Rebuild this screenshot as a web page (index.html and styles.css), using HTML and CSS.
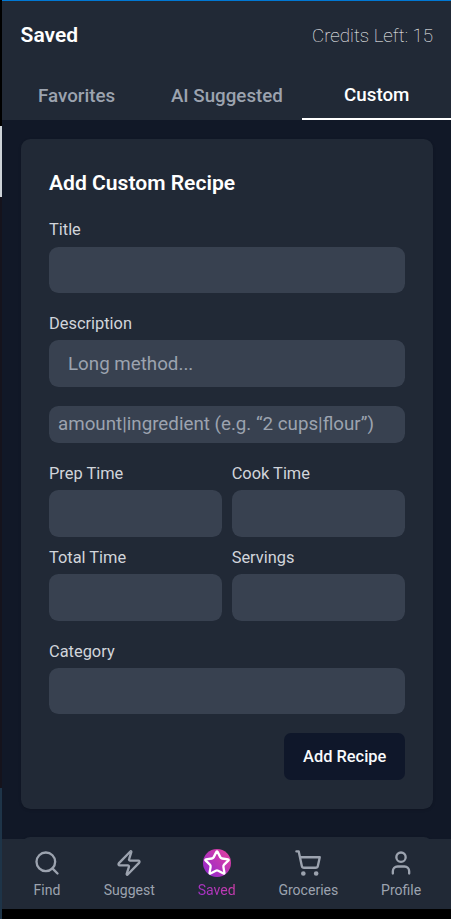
FILE: index.html
```html
<!DOCTYPE html>
<html lang="en">
<head>
<meta charset="utf-8">
<title>Saved</title>
<link rel="stylesheet" href="styles.css">
</head>
<body>
<div class="window">
  <header class="header">
    <div class="topbar">
      <h1 class="page-title">Saved</h1>
      <span class="credits">Credits Left: 15</span>
    </div>
    <nav class="tabs">
      <a class="tab">Favorites</a>
      <a class="tab">AI Suggested</a>
      <a class="tab active">Custom</a>
    </nav>
  </header>
  <main class="content">
    <form class="card">
      <h2 class="card-title">Add Custom Recipe</h2>
      <label class="field"><span class="label">Title</span><input class="input" type="text"></label>
      <label class="field"><span class="label">Description</span><input class="input" type="text" placeholder="Long method..."></label>
      <input class="input ingredients" type="text" placeholder="amount|ingredient (e.g. “2 cups|flour”)">
      <div class="grid">
        <label class="cell"><span class="label">Prep Time</span><input class="input" type="text"></label>
        <label class="cell"><span class="label">Cook Time</span><input class="input" type="text"></label>
        <label class="cell"><span class="label">Total Time</span><input class="input" type="text"></label>
        <label class="cell"><span class="label">Servings</span><input class="input" type="text"></label>
      </div>
      <label class="field"><span class="label">Category</span><input class="input" type="text"></label>
      <div class="actions"><button class="submit" type="button">Add Recipe</button></div>
    </form>
    <div class="card next-card"></div>
  </main>
  <nav class="bottom-nav">
    <a class="nav-item">
      <svg class="icon" viewBox="0 0 24 24"><circle cx="11" cy="11" r="8"/><path d="m21 21-4.35-4.35"/></svg>
      <span>Find</span>
    </a>
    <a class="nav-item">
      <svg class="icon" viewBox="0 0 24 24"><path d="M4 14a1 1 0 0 1-.78-1.63l9.9-10.2a.5.5 0 0 1 .86.46l-1.92 6.02A1 1 0 0 0 13 10h7a1 1 0 0 1 .78 1.63l-9.9 10.2a.5.5 0 0 1-.86-.46l1.92-6.02A1 1 0 0 0 11 14z"/></svg>
      <span>Suggest</span>
    </a>
    <a class="nav-item current">
      <span class="badge"><svg class="icon" viewBox="0 0 24 24"><path d="M11.525 2.295a.53.53 0 0 1 .95 0l2.31 4.679a2.123 2.123 0 0 0 1.595 1.16l5.166.756a.53.53 0 0 1 .294.904l-3.736 3.638a2.123 2.123 0 0 0-.611 1.878l.882 5.14a.53.53 0 0 1-.771.56l-4.618-2.428a2.122 2.122 0 0 0-1.973 0L6.396 21.01a.53.53 0 0 1-.77-.56l.881-5.139a2.122 2.122 0 0 0-.611-1.879L2.16 9.795a.53.53 0 0 1 .294-.906l5.165-.755a2.122 2.122 0 0 0 1.597-1.16z"/></svg></span>
      <span class="current-text">Saved</span>
    </a>
    <a class="nav-item">
      <svg class="icon" viewBox="0 0 24 24"><circle cx="8" cy="21" r="1"/><circle cx="19" cy="21" r="1"/><path d="M2.05 2.05h2l2.66 12.42a2 2 0 0 0 2 1.58h9.78a2 2 0 0 0 1.95-1.57l1.65-7.43H5.12"/></svg>
      <span>Groceries</span>
    </a>
    <a class="nav-item">
      <svg class="icon" viewBox="0 0 24 24"><circle cx="12" cy="7" r="4"/><path d="M19 21v-2a4 4 0 0 0-4-4H9a4 4 0 0 0-4 4v2"/></svg>
      <span>Profile</span>
    </a>
  </nav>
</div>
</body>
</html>
```
FILE: styles.css
```css
* { box-sizing: border-box; }
body {
  margin: 0;
  height: 919px;
  padding-left: 2px;
  overflow: hidden;
  font-family: Roboto, "Liberation Sans", sans-serif;
  background: linear-gradient(#000 0 126px, #cdd3d8 126px 197px, #15131c 197px 788px, #1e3448 788px) left / 2px 100% no-repeat #000;
}
.window {
  display: flex;
  flex-direction: column;
  height: 909px;
  border-top: 1px solid #0078d4;
  background: #111827;
}
.header { flex: none; height: 119px; background: #212936; }
.topbar {
  display: flex;
  justify-content: space-between;
  align-items: center;
  height: 69px;
  padding: 0 18px 0 18.6px;
}
.page-title { margin: 0; padding-bottom: 2px; font-size: 21px; line-height: 28px; font-weight: 600; color: #fff; }
.credits { font-size: 18.75px; font-weight: 100; color: #fff; padding-top: 1px; }
.tabs { display: grid; grid-template-columns: repeat(3, 1fr); height: 50px; padding-left: 0.8px; margin-right: -0.6px; }
.tab {
  padding-top: 15px;
  text-align: center;
  font-size: 18.75px;
  line-height: 23px;
  font-weight: 500;
  color: #9ca3af;
}
.tab:first-child { padding-right: 2px; }
.tab:nth-child(2) { padding-right: 0.6px; }
.tab.active { padding-top: 14px; color: #fff; border-bottom: 2px solid #fff; }
.content { flex: 1; min-height: 0; overflow: hidden; padding: 19px 18px 0 19px; }
.card {
  height: 670px;
  padding: 28px;
  border-radius: 9.4px;
  background: #212936;
  box-shadow: 0 1px 3px rgba(0, 0, 0, .15);
}
.next-card { height: 60px; margin-top: 28px; }
.card-title { margin: 0 0 19.4px; font-size: 21.08px; line-height: 32px; font-weight: 600; color: #fff; }
.field { display: block; margin-bottom: 18.74px; }
.label { display: block; height: 24px; margin-bottom: 4px; font-size: 16.4px; line-height: 24px; color: #d1d5db; }
.card-title + .field .label { margin-bottom: 4.2px; }
.input {
  display: block;
  width: 100%;
  height: 46.85px;
  padding: 0 19px;
  border: 0;
  border-radius: 9.4px;
  background: #384150;
  color: #fff;
  font: 18.75px Roboto, "Liberation Sans", sans-serif;
}
.input::placeholder { color: #9ca3af; opacity: 1; }
.ingredients { height: 37.5px; padding: 0 9px; margin-bottom: 18.5px; }
.grid { display: grid; grid-template-columns: 1fr 1fr; column-gap: 9.4px; row-gap: 9.4px; margin-bottom: 18.7px; }
.actions { display: flex; justify-content: flex-end; }
.submit {
  width: 120.6px;
  height: 47px;
  padding: 0 0 1px;
  border: 0;
  border-radius: 7px;
  background: #0f172a;
  color: #f8fafc;
  font: 500 16.4px Roboto, "Liberation Sans", sans-serif;
}
.bottom-nav {
  flex: none;
  display: flex;
  justify-content: space-between;
  height: 70px;
  padding: 10px 29.8px 0 31px;
  background: #212936;
}
.nav-item {
  display: flex;
  flex-direction: column;
  align-items: center;
  font-size: 14.05px;
  line-height: 19px;
  color: #9ca3af;
}
.icon {
  flex: none;
  width: 28px;
  height: 28px;
  margin-bottom: 4px;
  fill: none;
  stroke: currentColor;
  stroke-width: 2;
  stroke-linecap: round;
  stroke-linejoin: round;
}
.badge {
  width: 28px;
  height: 28px;
  margin-bottom: 4px;
  border-radius: 50%;
  background: linear-gradient(45deg, #8b25d2, #e8439d);
  color: #fff;
}
.current-text {
  background: linear-gradient(45deg, #9b2fce, #d43fa5);
  background-clip: text;
  -webkit-background-clip: text;
  color: transparent;
}
```
